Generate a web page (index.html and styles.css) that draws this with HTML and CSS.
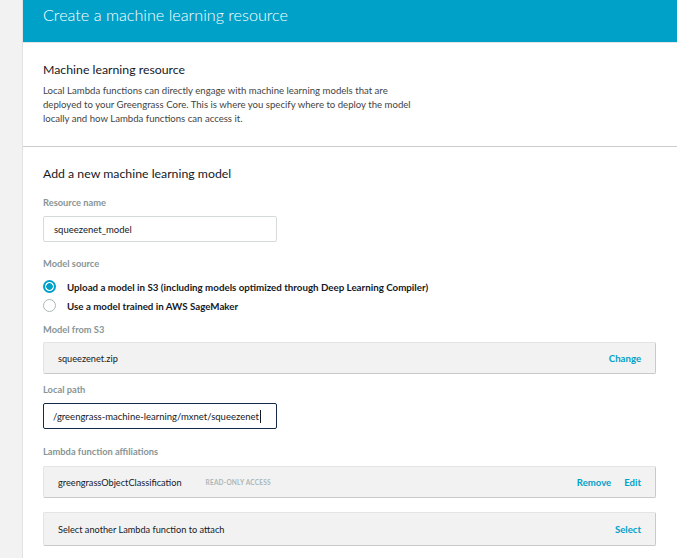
FILE: index.html
```html
<!DOCTYPE html>
<html>
<head>
<meta charset="utf-8">
<link rel="stylesheet" href="styles.css">
</head>
<body>
<div class="rail"></div>
<main class="panel">
  <header class="header">
    <h1 class="title">Create a machine learning resource</h1>
  </header>
  <section class="intro">
    <h2 class="heading">Machine learning resource</h2>
    <p class="desc">Local Lambda functions can directly engage with machine learning models that are<br>deployed to your Greengrass Core. This is where you specify where to deploy the model<br>locally and how Lambda functions can access it.</p>
  </section>
  <section class="form">
    <h2 class="heading">Add a new machine learning model</h2>
    <div class="label l-first">Resource name</div>
    <div class="input">squeezenet_model</div>
    <div class="label">Model source</div>
    <div class="radios">
      <div class="radio-row"><span class="radio checked"></span><span class="radio-text">Upload a model in S3 (including models optimized through Deep Learning Compiler)</span></div>
      <div class="radio-row"><span class="radio"></span><span class="radio-text">Use a model trained in AWS SageMaker</span></div>
    </div>
    <div class="label l-s3">Model from S3</div>
    <div class="box"><span class="box-text">squeezenet.zip</span><span class="links"><a class="link">Change</a></span></div>
    <div class="label l-after-box">Local path</div>
    <div class="input focused">/greengrass-machine-learning/mxnet/squeezenet<span class="caret"></span></div>
    <div class="label l-lambda">Lambda function affiliations</div>
    <div class="box"><span class="box-text">greengrassObjectClassification<span class="tag">READ-ONLY ACCESS</span></span><span class="links"><a class="link">Remove</a><a class="link">Edit</a></span></div>
    <div class="box box-tall"><span class="box-text">Select another Lambda function to attach</span><span class="links"><a class="link">Select</a></span></div>
  </section>
</main>
</body>
</html>
```
FILE: styles.css
```css
html, body {
  margin: 0;
  padding: 0;
}
body {
  display: flex;
  min-height: 558px;
  background: #f2f2f2;
  font-family: "Lato", "Open Sans", sans-serif;
  color: #16191f;
  overflow: hidden;
}
.rail {
  width: 22px;
  flex: none;
  border-right: 1px solid #e2e2e2;
}
.panel {
  flex: 1;
  background: #fff;
  min-width: 0;
}
.header {
  background: #00a1c9;
  height: 43px;
  border-bottom: 1px solid #e4e4e4;
  padding: 0 20px;
  box-sizing: border-box;
}
.title {
  margin: 0;
  padding-top: 3px;
  font-size: 16.2px;
  line-height: 24px;
  font-weight: 300;
  color: #fff;
}
.intro {
  padding: 18px 21px 20px 20px;
  border-bottom: 1px solid #cccccc;
}
.heading {
  margin: 0;
  font-size: 12.3px;
  line-height: 18px;
  font-weight: 400;
  color: #16191f;
}
.desc {
  margin: 5px 0 0;
  font-size: 9.6px;
  line-height: 14px;
  color: #444;
}
.form {
  padding: 18px 21px 20px 20px;
}
.label {
  margin-top: 15px;
  margin-bottom: 6px;
  font-size: 9.3px;
  line-height: 14px;
  font-weight: 700;
  color: #879596;
}
.l-first {
  margin-top: 13px;
}
.l-s3 {
  margin-top: 8px;
  margin-bottom: 5px;
}
.l-after-box {
  margin-top: 9px;
}
.l-lambda {
  margin-top: 16px;
  margin-bottom: 7px;
}
.input {
  width: 234px;
  height: 26px;
  box-sizing: border-box;
  border: 1px solid #d5dbdb;
  border-radius: 2px;
  padding: 0 10px;
  display: flex;
  align-items: center;
  white-space: nowrap;
  font-size: 9.5px;
  color: #16191f;
}
.input.focused {
  border-color: #16294a;
  padding-left: 9px;
}
.caret {
  display: inline-block;
  width: 1px;
  height: 13px;
  background: #16191f;
  margin-left: 1px;
}
.radios {
  margin-top: 2px;
}
.radio-row {
  height: 19px;
  display: flex;
  align-items: center;
}
.radio {
  width: 13px;
  height: 13px;
  box-sizing: border-box;
  border-radius: 50%;
  border: 1px solid #aab7b8;
  background: #fff;
  flex: none;
  margin-right: 11px;
}
.radio.checked {
  border: 2px solid #00a1c9;
  background: radial-gradient(circle, #00a1c9 0 3px, #fff 3.5px);
}
.radio-text {
  font-size: 9.75px;
  font-weight: 700;
  color: #16191f;
}
.box {
  height: 32px;
  box-sizing: border-box;
  background: #f2f2f2;
  border: 1px solid #e4e4e4;
  border-right-color: #c9c9c9;
  border-bottom-color: #c9c9c9;
  border-radius: 2px;
  display: flex;
  align-items: center;
  justify-content: space-between;
  padding: 0 14px 0 14px;
  font-size: 9.2px;
}
.box + .box {
  margin-top: 14px;
}
.box-tall {
  height: 34px;
}
.box-text {
  color: #16191f;
  display: flex;
  align-items: center;
}
.tag {
  margin-left: 24px;
  font-size: 6.5px;
  font-weight: 700;
  letter-spacing: 0.2px;
  color: #aab7b8;
}
.links {
  display: flex;
  gap: 13px;
}
.link {
  color: #00a1c9;
  font-weight: 700;
  font-size: 9.6px;
}
```
